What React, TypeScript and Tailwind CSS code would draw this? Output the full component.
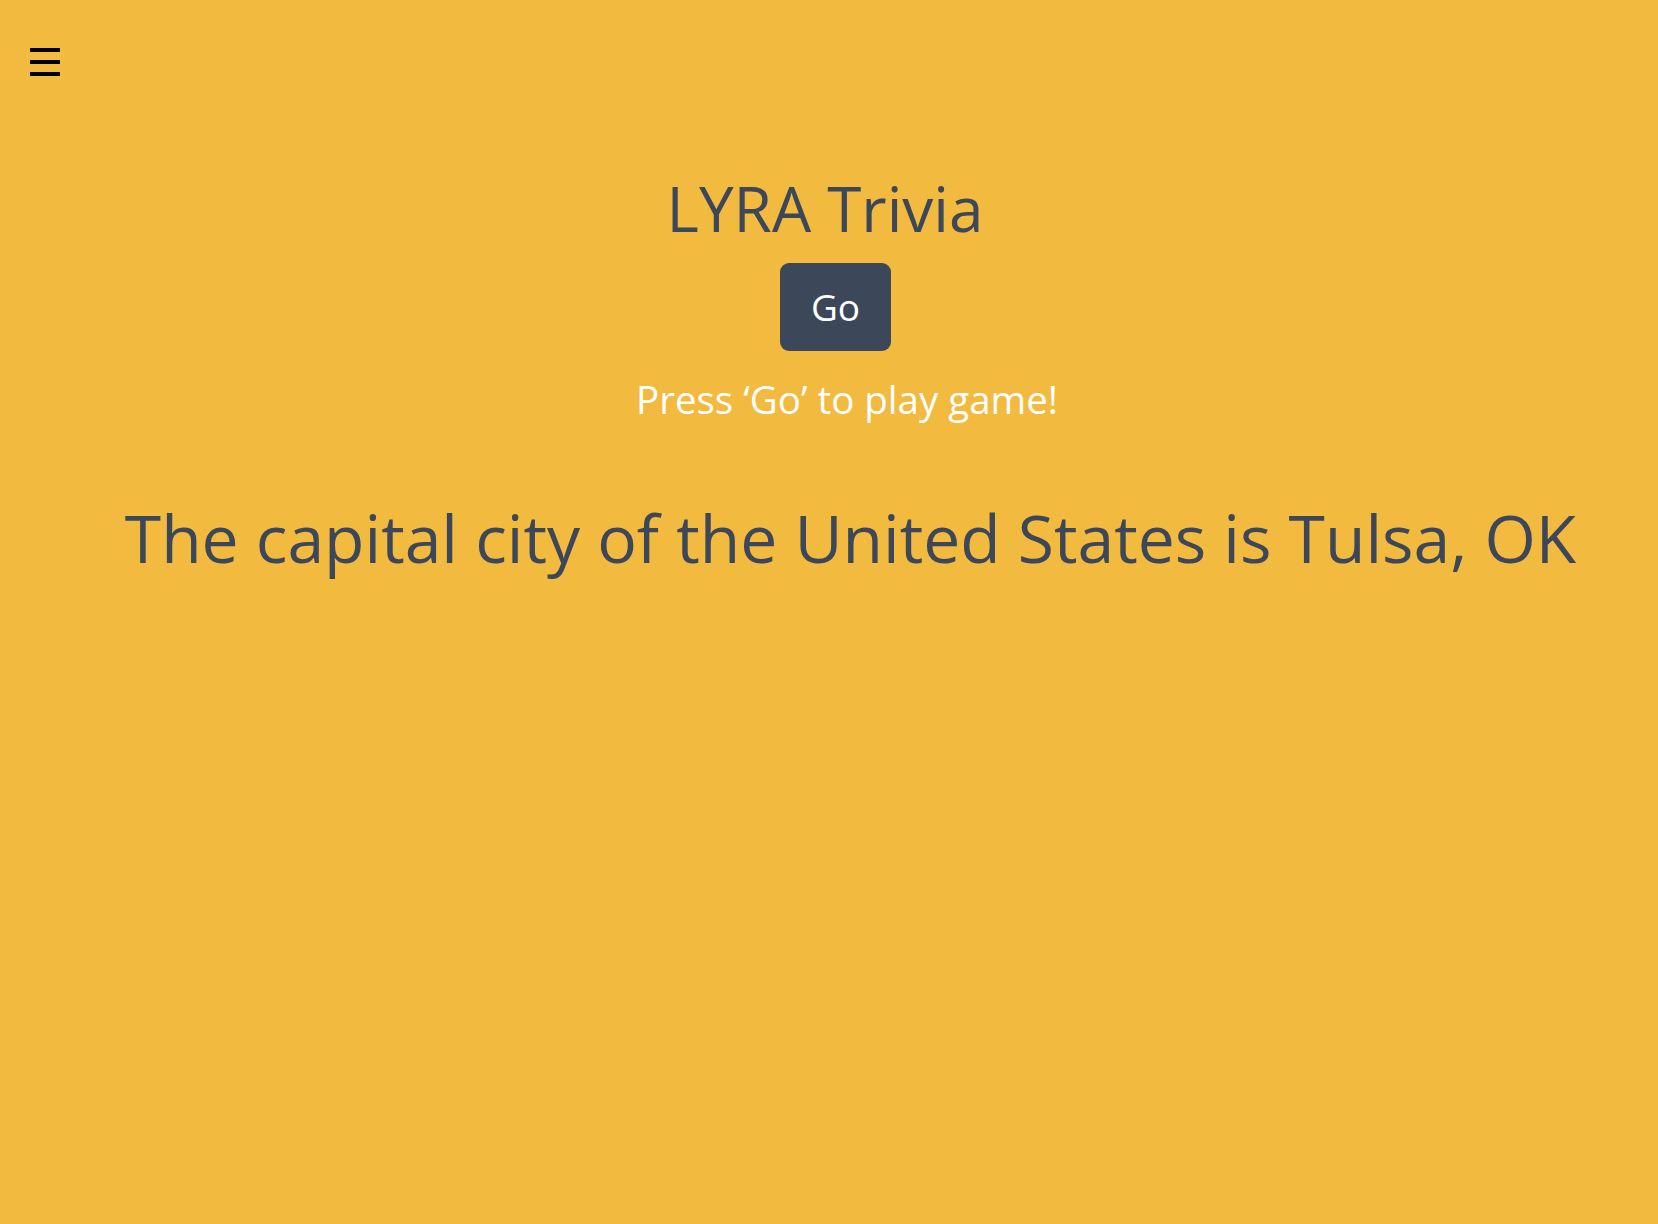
export default function App() {
  return (
    <div
      className="min-h-[1224px] w-full bg-[#f2ba3f] text-[#3c4759]"
      style={{ fontFamily: '"Open Sans", "Liberation Sans", sans-serif' }}
    >
      <div className="pt-[48px] pl-[30px]">
        <button className="flex flex-col gap-[8px]" aria-label="menu">
          <span className="block h-[4px] w-[30px] bg-black" />
          <span className="block h-[4px] w-[30px] bg-black" />
          <span className="block h-[4px] w-[30px] bg-black" />
        </button>
      </div>

      <div className="flex flex-col items-center">
        <div className="flex w-full justify-center pr-[8px] mt-[101px]">
          <h1 className="text-[62px] leading-none">LYRA Trivia</h1>
        </div>
        <div className="flex w-full justify-center pl-[13px] mt-[24px]">
          <button className="h-[88px] w-[111px] rounded-[9px] bg-[#3c4759] text-[37px] text-white">
            Go
          </button>
        </div>
        <div className="flex w-full justify-center pl-[36px] mt-[29px]">
          <p className="text-[38.5px] leading-none text-white">Press ‘Go’ to play game!</p>
        </div>
        <div className="flex w-full justify-center pl-[43px] mt-[85px]">
          <p className="text-[66px] leading-none">The capital city of the United States is Tulsa, OK</p>
        </div>
      </div>
    </div>
  );
}
